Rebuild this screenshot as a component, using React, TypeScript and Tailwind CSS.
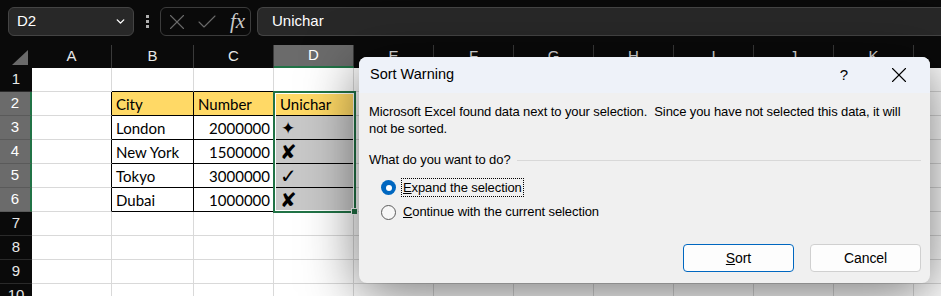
import { Check, ChevronDown, X } from "lucide-react";

const cols = ["A", "B", "C", "D", "E", "F", "G", "H", "I", "J", "K", "L"];
const rows = [1, 2, 3, 4, 5, 6, 7, 8, 9, 10];

const data: Record<number, string[]> = {
  2: ["City", "Number", "Unichar"],
  3: ["London", "2000000", "✦"],
  4: ["New York", "1500000", "✘"],
  5: ["Tokyo", "3000000", "✓"],
  6: ["Dubai", "1000000", "✘"],
};

function Cell({ r, c }: { r: number; c: number }) {
  const inTable = c >= 1 && c <= 3;
  const rightBlack = r >= 2 && r <= 6 && c <= 3;
  const bottomBlack = inTable && r >= 1 && r <= 6;
  const value = data[r]?.[c - 1] ?? "";

  let bg = "bg-white";
  if (r === 2 && inTable) bg = "bg-[#ffd966]";
  else if (r >= 3 && r <= 6 && c === 3) bg = "bg-[#c8c8c8]";

  const align =
    c === 2 && r > 2 ? "justify-end pr-[3px]" : c === 3 ? "pl-[6px]" : "pl-[4px]";
  const glyph = c === 3 && r > 2;

  let glyphCls = "text-[20px] leading-[22px]";
  if (r === 3) glyphCls = "text-[17px] leading-[21px] pl-[1px]";

  return (
    <div
      className={`h-[24px] flex items-end overflow-hidden border-r border-b ${
        rightBlack ? "border-r-black" : "border-r-[#d9d9d9]"
      } ${bottomBlack ? "border-b-black" : "border-b-[#d9d9d9]"} ${bg} ${align}`}
    >
      {glyph ? (
        <span className={`font-['DejaVu_Sans',sans-serif] text-black ${glyphCls}`}>{value}</span>
      ) : (
        <span className="font-['Lato',sans-serif] text-[15px] leading-[21px] text-black whitespace-nowrap">
          {value}
        </span>
      )}
    </div>
  );
}

function Radio({ checked }: { checked: boolean }) {
  return checked ? (
    <span className="w-[15px] h-[15px] rounded-full bg-[#0067c0] flex items-center justify-center">
      <span className="w-[6px] h-[6px] rounded-full bg-white" />
    </span>
  ) : (
    <span className="w-[15px] h-[15px] rounded-full border border-[#5c5c5c] bg-[#f7f7f7]" />
  );
}

export default function App() {
  return (
    <div className="relative w-[941px] h-[296px] overflow-hidden bg-[#0a0a0a] font-['Liberation_Sans',sans-serif]">
      {/* Formula bar */}
      <div className="h-[45px] flex items-start pt-[7px] pl-[8px]">
        <div className="w-[126px] h-[29px] rounded-[6px] bg-[#282828] border border-[#444] flex items-center justify-between pl-[8px] pr-[6px]">
          <span className="text-white text-[15px]">D2</span>
          <ChevronDown size={13} strokeWidth={2.6} className="text-white" />
        </div>
        <div className="w-[26px] h-[29px] flex flex-col items-center justify-center gap-[2px]">
          <span className="w-[3px] h-[3px] bg-[#b0b0b0]" />
          <span className="w-[3px] h-[3px] bg-[#b0b0b0]" />
          <span className="w-[3px] h-[3px] bg-[#b0b0b0]" />
        </div>
        <div className="w-[91px] h-[29px] rounded-[6px] border border-[#3c3c3c] flex items-center pl-[3px]">
          <X size={26} strokeWidth={1} className="text-[#6a6a6a]" />
          <Check size={24} strokeWidth={1.1} className="text-[#6a6a6a] ml-[5px]" />
          <span className="ml-[11px] font-['Liberation_Serif',serif] italic text-[21px] text-[#c8c8c8] leading-none">
            fx
          </span>
        </div>
        <div className="ml-[6px] flex-1 h-[29px] rounded-l-[6px] bg-[#282828] border border-r-0 border-[#444] flex items-center pl-[14px]">
          <span className="text-white text-[15px]">Unichar</span>
        </div>
      </div>

      {/* Sheet */}
      <div className="relative">
        <div className="grid grid-cols-[32px_80px_82px_80px_80px_repeat(8,80px)]">
          <div className="h-[23px] flex items-end justify-end pr-[4px] pb-[3px]">
            <div className="w-0 h-0 border-l-[16px] border-l-transparent border-b-[15px] border-b-[#6a6a6a]" />
          </div>
          {cols.map((c) =>
            c === "D" ? (
              <div
                key={c}
                className="h-[23px] bg-[#6b6b6b] border-b-2 border-b-[#217346] border-r border-r-[#3a3a3a] flex items-center justify-center text-white text-[15px]"
              >
                {c}
              </div>
            ) : (
              <div
                key={c}
                className="h-[23px] border-r border-r-[#3a3a3a] flex items-center justify-center text-[#e8e8e8] text-[15px]"
              >
                {c}
              </div>
            )
          )}
          {rows.map((r) => [
            r >= 2 && r <= 6 ? (
              <div
                key={`h${r}`}
                className="h-[24px] bg-[#6b6b6b] border-r-2 border-r-[#217346] border-b border-b-[#5a5a5a] flex items-center justify-center text-white text-[15px]"
              >
                {r}
              </div>
            ) : (
              <div
                key={`h${r}`}
                className="h-[24px] border-b border-b-[#2a2a2a] flex items-center justify-center text-[#e8e8e8] text-[15px]"
              >
                {r}
              </div>
            ),
            ...cols.map((_, c) => <Cell key={`${r}-${c}`} r={r} c={c} />),
          ])}
        </div>

        {/* Selection D2:D6 */}
        <div className="absolute left-[273px] top-[46px] w-[83px] h-[122px] border-2 border-[#217346] pointer-events-none">
          <div className="absolute inset-0 border border-white" />
          <div className="absolute -right-[4px] -bottom-[4px] w-[7px] h-[7px] bg-[#217346] border border-white" />
        </div>
      </div>

      {/* Sort Warning dialog */}
      <div className="absolute left-[359px] top-[57px] w-[571px] h-[226px] rounded-[8px] bg-[#f0f0f0] shadow-[0_10px_55px_rgba(0,0,0,0.55)] flex flex-col text-black">
        <div className="h-[36px] rounded-t-[8px] bg-[#eef2f9] flex items-center pl-[11px] pr-[18px]">
          <span className="text-[14.5px] flex-1">Sort Warning</span>
          <span className="text-[15px] mr-[38px]">?</span>
          <X size={26} strokeWidth={1} />
        </div>
        <div className="flex-1 flex flex-col pl-[10px] pr-[9px] pt-[11px] text-[13px] tracking-[-0.1px] leading-[16.5px]">
          <p className="whitespace-nowrap">
            Microsoft Excel found data next to your selection.&nbsp; Since you have not selected this
            data, it will
            <br />
            not be sorted.
          </p>
          <div className="mt-[15px] flex items-center gap-[6px]">
            <span>What do you want to do?</span>
            <span className="flex-1 h-px bg-[#d8d8d8]" />
          </div>
          <div className="mt-[9px] ml-[12px] flex items-center gap-[5px] h-[20px]">
            <Radio checked />
            <span className="border border-dotted border-black px-[1px] leading-[17px]">
              <u>E</u>xpand the selection
            </span>
          </div>
          <div className="mt-[5px] ml-[12px] flex items-center gap-[7px] h-[20px]">
            <Radio checked={false} />
            <span>
              <u>C</u>ontinue with the current selection
            </span>
          </div>
          <div className="mt-auto mb-[11px] flex justify-end gap-[16px]">
            <button className="w-[111px] h-[28px] rounded-[4px] border border-[#0067c0] bg-[#fdfdfd] text-[14px]">
              <u>S</u>ort
            </button>
            <button className="w-[111px] h-[28px] rounded-[4px] border border-[#d0d0d0] bg-[#fdfdfd] text-[14px]">
              Cancel
            </button>
          </div>
        </div>
      </div>
    </div>
  );
}
